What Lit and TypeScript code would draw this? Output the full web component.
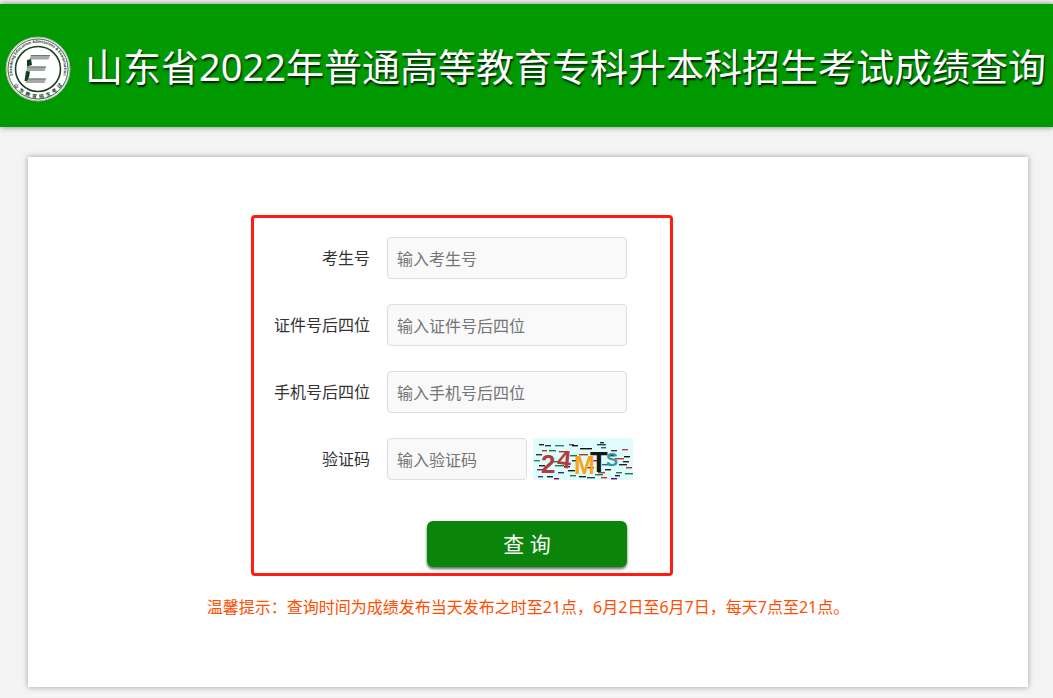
import { LitElement, html, css, svg } from "lit";
import { customElement } from "lit/decorators.js";

const FONT = css`"Noto Sans", "Noto Sans CJK SC", sans-serif`;

@customElement("exam-logo")
class ExamLogo extends LitElement {
  static styles = css`
    :host { display: block; flex: none; width: 66px; height: 66px; }
    svg { display: block; width: 100%; height: 100%; }
    text { font-family: ${FONT}; font-weight: 700; fill: #26402c; }
    .latin { font-size: 4px; }
    .han { font-size: 5px; }
  `;
  render() {
    return html`<svg viewBox="0 0 66 66" role="img" aria-label="山东省教育招生考试院">
      <defs>
        <path id="top" d="M8.700 42A26 26 0 1 1 57.300 42" />
        <path id="bottom" d="M6.500 45A29 29 0 0 0 59.500 45" />
      </defs>
      <circle cx="33" cy="33" r="32" fill="#eef2ee" stroke="#9fb5a0" stroke-width="1" />
      <circle cx="33" cy="33" r="30" fill="#fff" stroke="#4d6a51" stroke-width="1" />
      <circle cx="33" cy="33" r="22.5" fill="#fff" stroke="#1d3d24" stroke-width="1.6" />
      <text class="latin"><textPath href="#top" startOffset="50%" text-anchor="middle">Shandong Education Admissions &amp; Examination</textPath></text>
      <text class="han"><textPath href="#bottom" startOffset="50%" text-anchor="middle">山&ensp;东&ensp;教&ensp;育&ensp;招&ensp;生&ensp;考&ensp;试</textPath></text>
      <path d="M26 19H45L43.5 23.5H24.5ZM22 30.500H41L39.500 35H21.500ZM22 42.500H41L39.500 47H20.500Z" fill="#a3aaa4" />
      <path d="M26 19H45V20H25.700ZM22 30.500H41V31.500H21.700ZM22 42.500H41V43.500H21.700Z" fill="#6e7770" />
      <path d="M22 24L26 23L27 29L22 30.500ZM21 35L25 35.500L24 41L22 45L19.500 45Z" fill="#123d1d" />
    </svg>`;
  }
}

type Dash = [number, number, number, string];
const DASHES: Dash[] = [
  [6, 6, 5, "#222"], [12, 7, 6, "#236"], [22, 7, 9, "#2b7f80"], [36, 6, 5, "#555"], [39, 7, 6, "#111"],
  [64, 6, 9, "#246"], [67, 4, 4, "#222"], [9, 12, 5, "#a34"], [16, 12, 7, "#167c52"], [26, 13, 9, "#a33"],
  [47, 10, 12, "#111"], [68, 9, 5, "#268"], [78, 12, 6, "#333"], [89, 11, 6, "#a44"], [3, 16, 6, "#333"],
  [13, 18, 6, "#943"], [37, 17, 7, "#167c52"], [46, 16, 9, "#a33"], [75, 17, 7, "#234"], [91, 18, 6, "#111"],
  [1, 22, 6, "#228a8a"], [18, 23, 8, "#167c52"], [39, 22, 5, "#333"], [60, 22, 8, "#729"], [82, 20, 9, "#b33"],
  [90, 23, 6, "#222"], [6, 27, 6, "#222"], [22, 27, 9, "#167c52"], [31, 28, 6, "#222"], [53, 29, 8, "#822"],
  [69, 26, 8, "#268"], [86, 26, 8, "#222"], [93, 29, 6, "#a33"], [4, 31, 8, "#6a2a86"], [25, 34, 6, "#238"],
  [35, 32, 7, "#222"], [65, 34, 7, "#c33"], [72, 31, 6, "#222"], [83, 34, 6, "#167c52"], [92, 35, 8, "#167c52"],
  [5, 38, 5, "#249"], [14, 38, 6, "#222"], [21, 40, 5, "#609"], [37, 37, 6, "#167c52"], [46, 38, 7, "#222"],
  [54, 39, 8, "#246"], [62, 36, 8, "#167c52"], [68, 39, 6, "#c33"], [82, 37, 5, "#222"], [78, 40, 6, "#609"],
];

@customElement("captcha-image")
class CaptchaImage extends LitElement {
  static styles = css`
    :host { display: block; flex: none; width: 100px; height: 42px; }
    svg { display: block; width: 100%; height: 100%; }
    text { font-family: "Liberation Sans", Arial, sans-serif; font-weight: 700; }
  `;
  render() {
    return html`<svg viewBox="0 0 100 42" role="img" aria-label="验证码图片">
      <rect width="100" height="42" fill="#dffcfb" />
      ${DASHES.map(([x, y, w, c]) => svg`<rect x=${x} y=${y} width=${w} height="1.4" fill=${c} />`)}
      <text x="8" y="35" font-size="26" fill="#b13c3f">2</text>
      <text x="24" y="30" font-size="25" fill="#b13c3f" transform="rotate(6 32 24)">4</text>
      <text x="41" y="36" font-size="25" fill="#f5a51b">M</text>
      <text x="57" y="34" font-size="29" fill="#151515">T</text>
      <text x="73" y="28" font-size="18" fill="#379a9b">S</text>
    </svg>`;
  }
}

@customElement("app-root")
class AppRoot extends LitElement {
  static styles = css`
    * { box-sizing: border-box; }
    :host {
      display: flow-root;
      min-height: 100vh;
      background: #f4f4f4;
      font-family: ${FONT};
      font-size: 16px;
      line-height: 24px;
      color: #333;
    }
    .header {
      display: flex;
      align-items: flex-start;
      gap: 14px;
      margin-top: 4px;
      padding: 32px 0 25px 5px;
      background: #090;
      box-shadow: 0 0 6px rgba(0, 0, 0, 0.5);
    }
    .title {
      margin: 0;
      font-size: 38px;
      line-height: 60px;
      font-weight: 400;
      color: #fff;
      white-space: nowrap;
      text-shadow: 1px 2px 2px rgba(0, 0, 0, 0.8);
    }
    .card {
      margin: 30px 25px 11px 28px;
      padding: 58px 0 68px;
      background: #fff;
      box-shadow: 0 0 6px rgba(0, 0, 0, 0.35);
    }
    .form {
      display: grid;
      grid-template-columns: minmax(0, 1fr);
      gap: 25px;
      max-width: 422px;
      margin-left: 223px;
      padding: 19px 43px 6px 0;
      border: 3px solid #ff1c12;
      border-radius: 4px;
    }
    .row {
      display: grid;
      grid-template-columns: 116px minmax(0, 1fr);
      column-gap: 17px;
      align-items: center;
    }
    .label { text-align: right; }
    .input {
      width: 100%;
      height: 42px;
      padding: 1px 9px 0;
      border: 1px solid #ddd;
      border-radius: 4px;
      background: #f9f9f9;
      font: inherit;
      color: #333;
    }
    .input::placeholder { color: #757575; }
    .code { display: flex; align-items: center; gap: 6px; }
    .input.short { flex: none; width: 140px; }
    .submit {
      justify-self: end;
      width: 200px;
      height: 46px;
      margin-top: 16px;
      padding: 0;
      border: 0;
      border-radius: 6px;
      background: #0b840b;
      box-shadow: 0 2px 3px rgba(0, 0, 0, 0.6);
      font: inherit;
      font-size: 21px;
      color: #fff;
    }
    .tip {
      margin: 19px 0 0;
      text-align: center;
      color: #ff4e00;
    }
  `;

  private field(id: string, label: string) {
    return html`<div class="row">
      <label class="label" for=${id}>${label}</label>
      <input class="input" id=${id} type="text" placeholder=${"输入" + label} />
    </div>`;
  }

  render() {
    return html`
      <header class="header">
        <exam-logo></exam-logo>
        <h1 class="title">山东省2022年普通高等教育专科升本科招生考试成绩查询</h1>
      </header>
      <main class="card">
        <form class="form" @submit=${(e: Event) => e.preventDefault()}>
          ${this.field("ksh", "考生号")}
          ${this.field("zjh", "证件号后四位")}
          ${this.field("sjh", "手机号后四位")}
          <div class="row">
            <label class="label" for="yzm">验证码</label>
            <div class="code">
              <input class="input short" id="yzm" type="text" placeholder="输入验证码" />
              <captcha-image></captcha-image>
            </div>
          </div>
          <button class="submit" type="submit">查 询</button>
        </form>
        <p class="tip">温馨提示：查询时间为成绩发布当天发布之时至21点，6月2日至6月7日，每天7点至21点。</p>
      </main>
    `;
  }
}
